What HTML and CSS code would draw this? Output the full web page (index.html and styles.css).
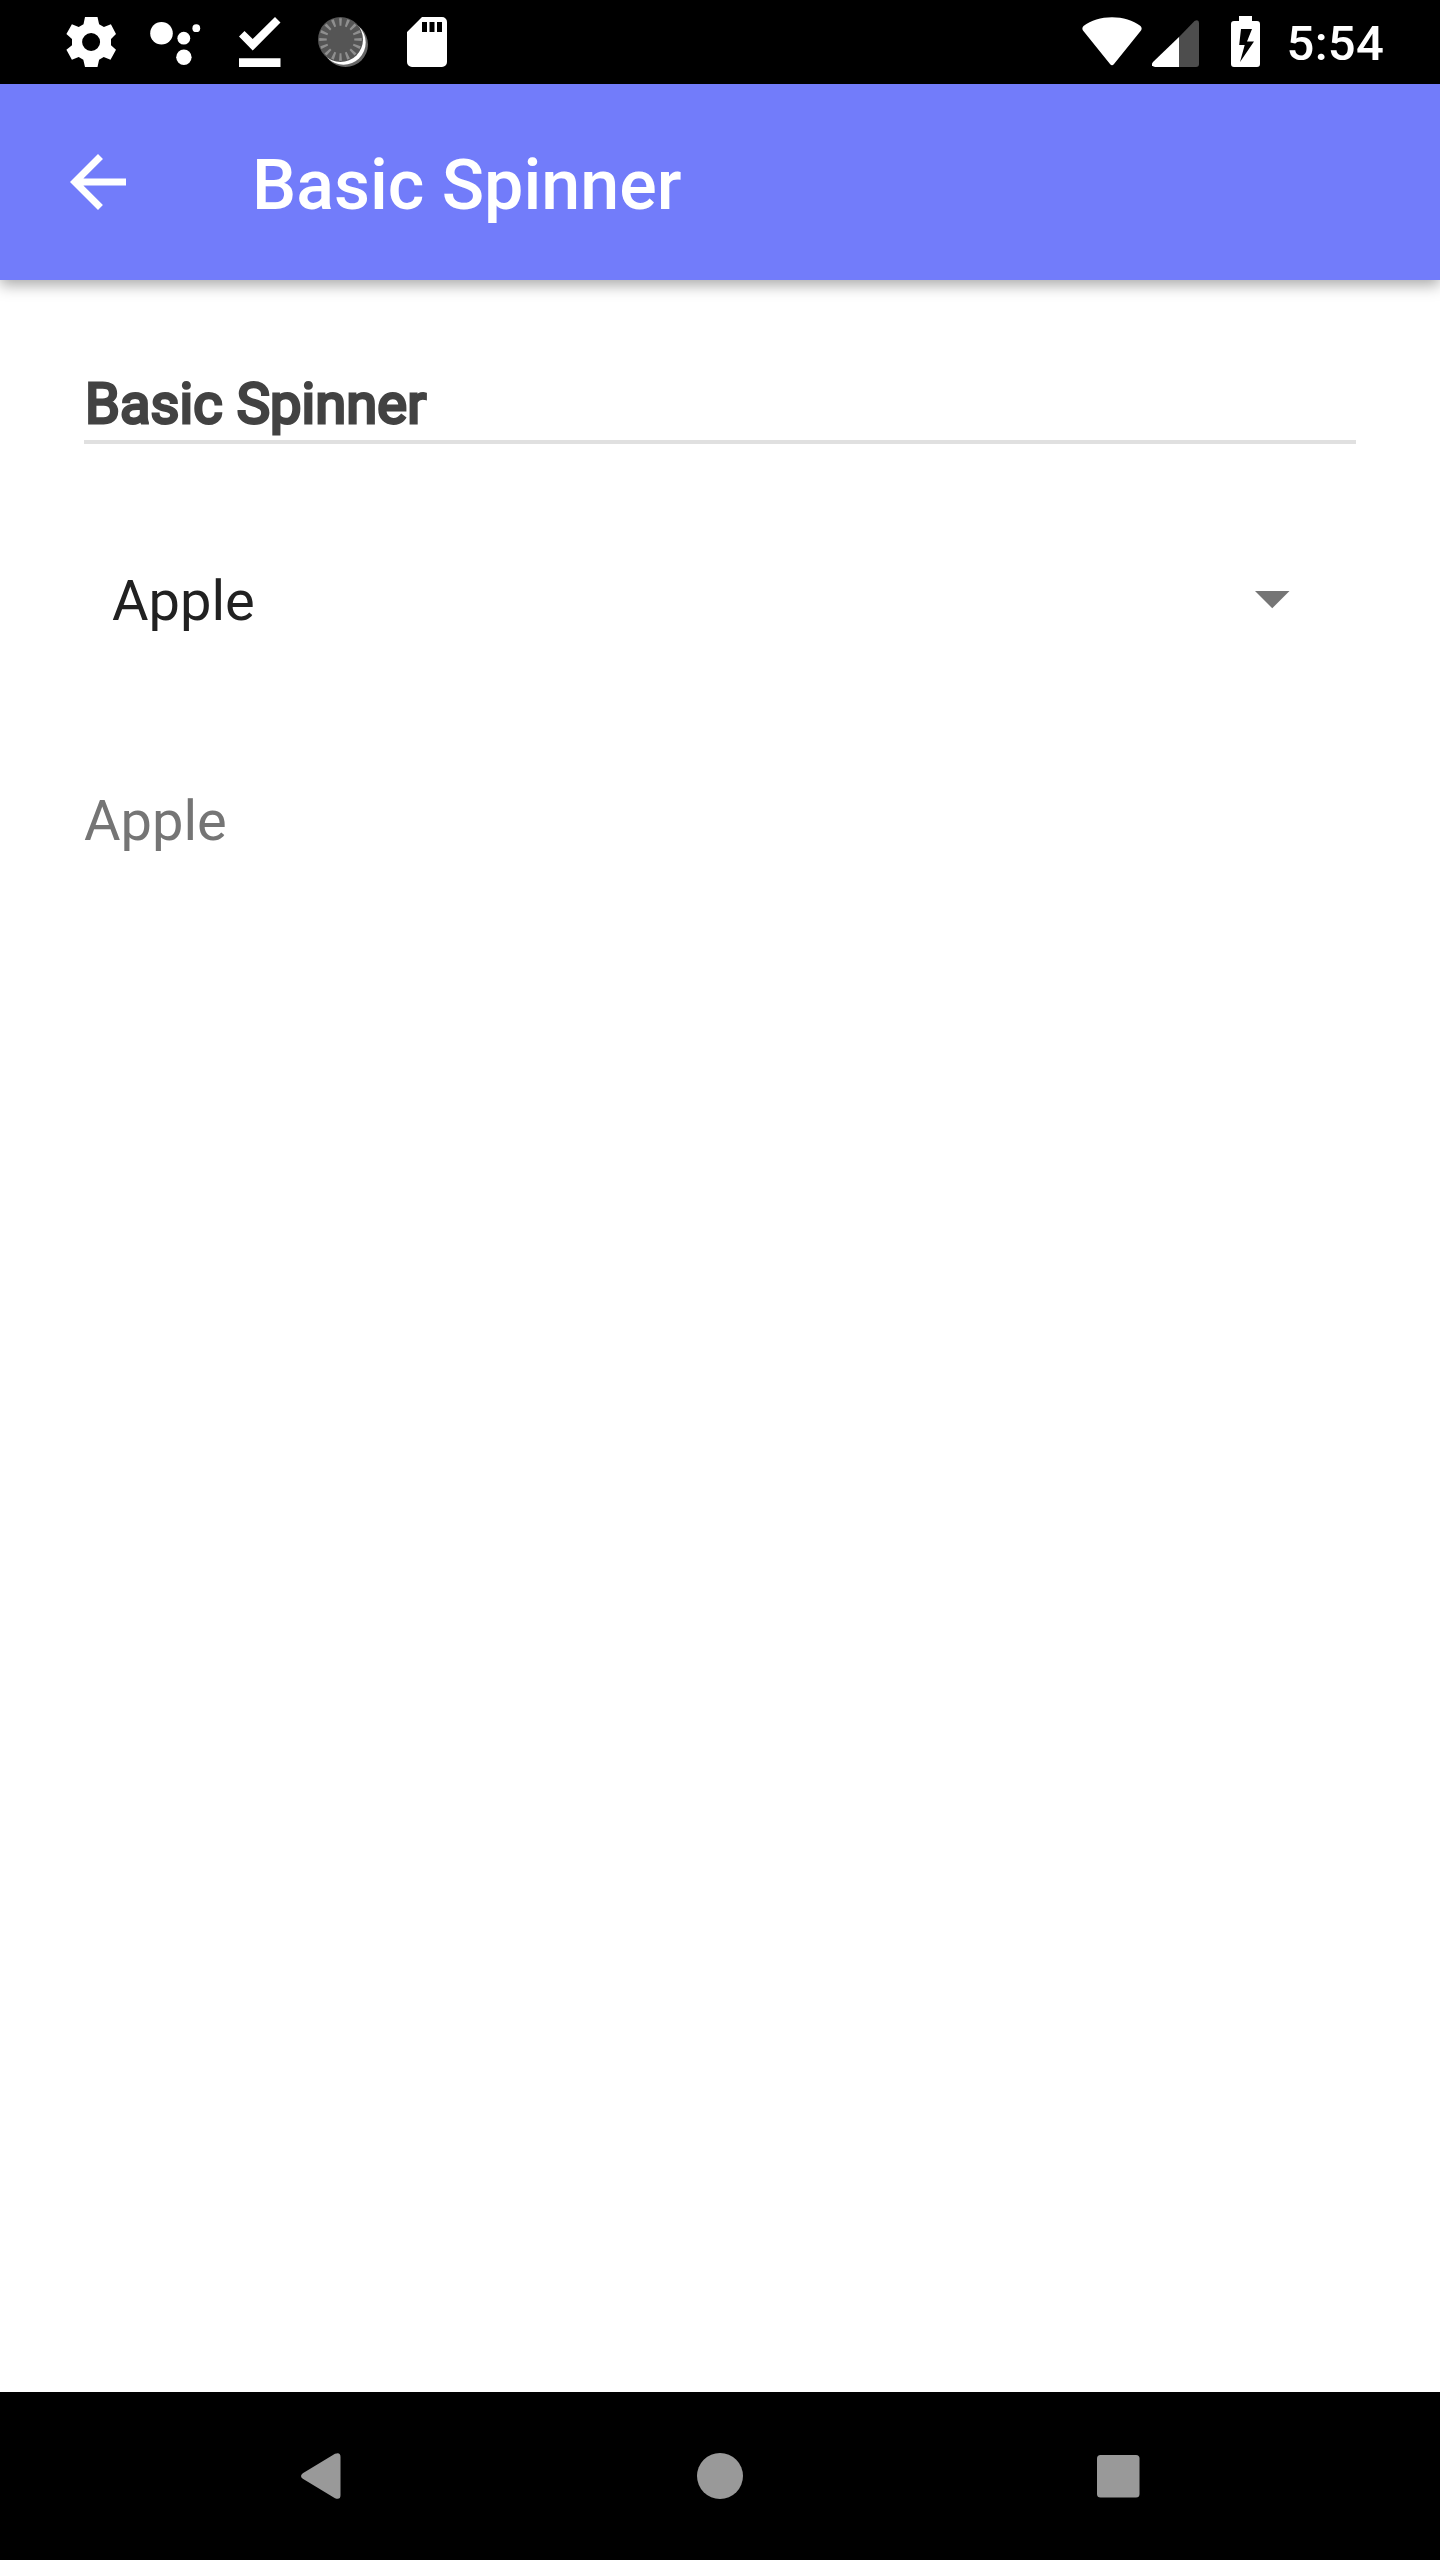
FILE: index.html
```html
<!DOCTYPE html>
<html lang="en">
<head>
<meta charset="utf-8">
<title>Basic Spinner</title>
<link rel="stylesheet" href="styles.css">
</head>
<body>
<div class="screen">
  <header class="status-bar">
    <div class="notifications">
      <svg class="icon" width="50" height="50" viewBox="0 0 50 50"><path fill="#fff" fill-rule="evenodd" d="M19 0h12.500l1.600 7.200 4.800 2.700 7-2.600 5.100 9.700-5 5v6.200l5 4.600-5.500 10-6.800-2.700-4.600 2.700L31.500 50H19l-1.700-7.200-4.600-2.700-6.800 2.700L.4 32.800l5.600-4.600V22L.4 17l5.500-9.700 6.800 2.600 4.800-2.700zM25.100 16a9 9 0 1 0 0 18 9 9 0 1 0 0-18z"/></svg>
      <svg class="icon" width="51" height="50" viewBox="0 0 51 50" fill="#fff"><circle cx="11.500" cy="16.300" r="11.300"/><circle cx="33.800" cy="21.200" r="6.400"/><circle cx="46.300" cy="11.200" r="3.900"/><circle cx="33.900" cy="40.200" r="7.700"/></svg>
      <svg class="icon" width="42" height="50" viewBox="0 0 42 50" fill="#fff"><path d="M0 19.500l5.500-5.500 8.200 8L36 0l5.500 5.600-27.800 28z"/><path d="M0 41.200h41.500V50H0z"/></svg>
      <svg class="icon" width="50" height="50" viewBox="0 0 50 50"><circle cx="27.500" cy="27.500" r="22.500" fill="#666"/><circle cx="25.500" cy="25.500" r="22.200" fill="#fff"/><circle cx="22.500" cy="22.500" r="22.500" fill="#555"/><circle cx="22.500" cy="22.500" r="17.500" fill="none" stroke="#8f8f8f" stroke-width="7.500" pathLength="160" stroke-dasharray="3.500 6.500" stroke-dashoffset="1.750"/></svg>
      <svg class="icon" width="40" height="50" viewBox="0 0 40 50"><path fill="#fff" fill-rule="evenodd" d="M15 0h20a5 5 0 0 1 5 5v40a5 5 0 0 1-5 5H5a5 5 0 0 1-5-5V15zM15 5v10h5V5zm7.500 0v10h5V5zM30 5v10h5V5z"/></svg>
    </div>
    <div class="indicators">
      <svg class="wifi" width="60" height="50" viewBox="0 0 60 50"><path fill="#fff" d="M1.500 9C9 3.500 19 .3 30 .3s21 3.200 28.500 8.700q2 2 .5 4.500L32 47q-2 2.500-4 0L1 13.500Q-.5 11 1.500 9z"/></svg>
      <svg class="signal" width="47" height="47" viewBox="0 0 47 47"><path fill="#4d4d4d" d="M27 17L42.500 1Q47-1 47 3v41q0 3-3 3H27z"/><path fill="#fff" d="M27 17v30H3q-5-1-2-5z"/></svg>
      <svg class="battery" width="29" height="51" viewBox="0 0 29 51"><path fill="#fff" fill-rule="evenodd" d="M8 0h13v5h5q3 0 3 3v40q0 3-3 3H3q-3 0-3-3V8q0-3 3-3h5zM10 13L8.200 29h5.500L9 46l14-20.500h-7L21 13z"/></svg>
      <span class="clock">5:54</span>
    </div>
  </header>
  <div class="toolbar">
    <svg class="back" width="56" height="56" viewBox="0 0 56 56"><path fill="#fff" d="M56 24.500H13.400l19.570-19.570L28 0 0 28l28 28 4.930-4.930L13.400 31.500H56z"/></svg>
    <h1 class="title">Basic Spinner</h1>
  </div>
  <main class="content">
    <h2 class="heading">Basic Spinner</h2>
    <div class="spinner">
      <span class="selected">Apple</span>
      <svg width="35" height="18" viewBox="0 0 35 18"><path fill="#757575" d="M0 0h34.500L17.250 17.250z"/></svg>
    </div>
    <p class="result">Apple</p>
  </main>
  <nav class="nav-bar">
    <svg width="42" height="46" viewBox="0 0 42 46"><path fill="#999" d="M1.800 20.200L34 .8q5.500-2 5.500 3v38.400q0 5-5.500 3L1.800 25.800q-3.600-2.800 0-5.600z"/></svg>
    <svg width="46" height="46" viewBox="0 0 46 46"><circle cx="23" cy="23" r="23" fill="#999"/></svg>
    <svg width="43" height="43" viewBox="0 0 43 43"><rect width="42.500" height="42.500" rx="3.500" fill="#999"/></svg>
  </nav>
</div>
</body>
</html>
```
FILE: styles.css
```css
* {
  box-sizing: border-box;
}

body {
  margin: 0;
  background: #fff;
  font-family: Roboto, sans-serif;
}

h1,
h2,
p {
  margin: 0;
}

svg {
  display: block;
  flex: none;
}

.screen {
  display: flex;
  flex-direction: column;
  width: 1440px;
  height: 2560px;
}

.status-bar {
  display: flex;
  justify-content: space-between;
  height: 84px;
  padding: 0 56px 0 66px;
  background: #000;
  color: #fff;
}

.notifications {
  display: flex;
  gap: 34px;
  padding-top: 17px;
}

.notifications .icon:nth-child(3) {
  margin-left: 4px;
}

.notifications .icon:nth-child(4) {
  margin-left: 3px;
}

.notifications .icon:nth-child(5) {
  margin-left: 5px;
}

.indicators {
  display: flex;
  align-items: flex-end;
  padding-bottom: 17px;
}

.wifi {
  margin-right: 10px;
}

.signal {
  margin-right: 32px;
}

.battery {
  margin-right: 27px;
}

.clock {
  height: 54px;
  font-size: 49px;
  font-weight: 500;
  letter-spacing: 0.25px;
  line-height: 62px;
}

.toolbar {
  display: flex;
  align-items: center;
  height: 196px;
  padding: 0 70px;
  gap: 126px;
  background: #727cfa;
  color: #fff;
  box-shadow: 0 5px 14px rgba(0, 0, 0, 0.34);
}

.title {
  padding-top: 6px;
  font-size: 70px;
  font-weight: 500;
  line-height: 82px;
}

.content {
  flex: 1;
  padding: 84px 84px 0;
}

.heading {
  height: 80px;
  padding-left: 1px;
  border-bottom: 4px solid #e0e0e0;
  color: #424242;
  font-size: 56px;
  font-weight: 400;
  letter-spacing: 0.1px;
  line-height: 80px;
  -webkit-text-stroke: 3px #424242;
}

.spinner {
  display: flex;
  align-items: center;
  justify-content: space-between;
  height: 84px;
  margin-top: 114px;
  padding: 0 66px 0 28px;
  color: #212121;
  font-size: 56px;
  line-height: 66px;
}

.selected {
  padding-top: 2px;
}

.result {
  margin-top: 146px;
  color: #757575;
  font-size: 56px;
  line-height: 66px;
}

.nav-bar {
  display: flex;
  align-items: center;
  justify-content: space-between;
  height: 168px;
  padding: 0 300px 0 301px;
  background: #000;
}
```
